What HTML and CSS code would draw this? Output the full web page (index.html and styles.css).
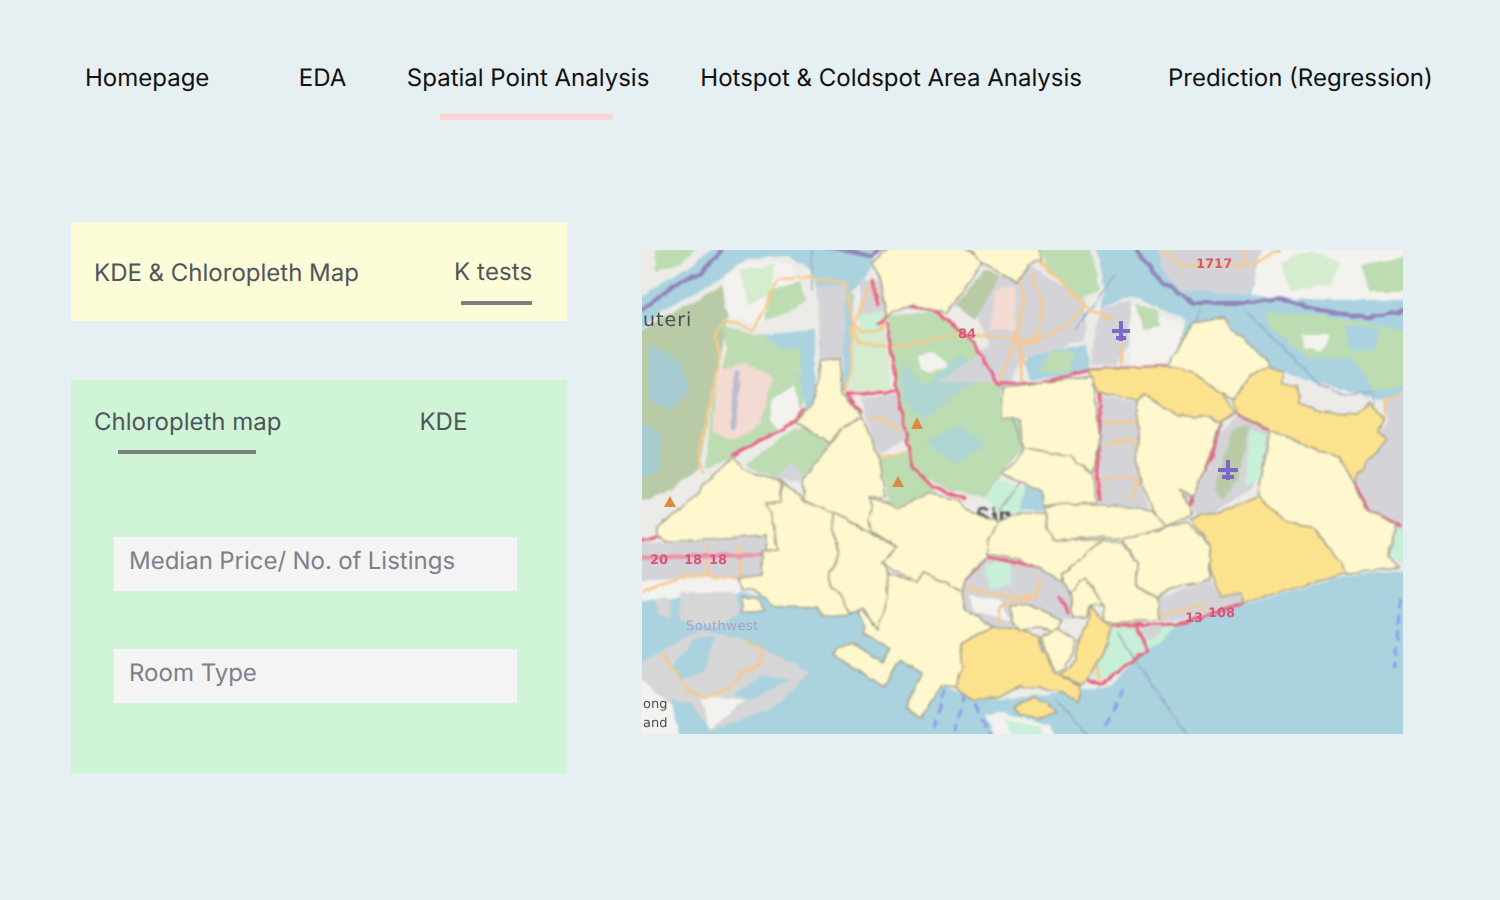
FILE: index.html
```html
<!DOCTYPE html>
<html lang="en">
<head>
<meta charset="utf-8">
<title>Spatial Point Analysis</title>
<link rel="stylesheet" href="styles.css">
</head>
<body>
<nav class="nav">
  <a class="nav-item home">Homepage</a>
  <a class="nav-item eda">EDA</a>
  <a class="nav-item spatial">Spatial Point Analysis</a>
  <a class="nav-item hotspot">Hotspot &amp; Coldspot Area Analysis</a>
  <a class="nav-item prediction">Prediction (Regression)</a>
</nav>
<div class="nav-marker"></div>
<main class="content">
  <section class="side">
    <div class="tabs-yellow">
      <div class="tab-row">
        <span>KDE &amp; Chloropleth Map</span>
        <span class="tab-k">K tests</span>
      </div>
      <div class="marker marker-k"></div>
    </div>
    <div class="card-green">
      <div class="tab-row row-green">
        <span>Chloropleth map</span>
        <span class="tab-kde">KDE</span>
      </div>
      <div class="marker marker-c"></div>
      <div class="field field-first">Median Price/ No. of Listings</div>
      <div class="field">Room Type</div>
    </div>
  </section>
  <div class="map">
    <svg class="map-svg" viewBox="642 250 761 484" width="761" height="484" xmlns="http://www.w3.org/2000/svg">
      <defs>
        <filter id="rough" x="-2%" y="-2%" width="104%" height="104%" color-interpolation-filters="sRGB">
          <feTurbulence type="fractalNoise" baseFrequency="0.09" numOctaves="2" seed="4" result="n"/>
          <feDisplacementMap in="SourceGraphic" in2="n" scale="5" xChannelSelector="R" yChannelSelector="G" result="d"/>
          <feGaussianBlur in="d" stdDeviation="0.8"/>
        </filter>
        <filter id="soft" x="-10%" y="-10%" width="120%" height="120%">
          <feGaussianBlur stdDeviation="0.6"/>
        </filter>
      </defs>
      <g class="map-art">
      <rect class="water" x="630" y="238" width="785" height="508"/>
      <!-- land -->
      <polygon class="land" points="630,340 660,312 700,292 722,278 745,258 790,256 812,270 820,300 850,295 868,272 875,238 1095,238 1105,290 1100,310 1130,295 1185,320 1180,350 1165,366 1260,366 1380,400 1415,390 1415,570 1350,575 1243,605 1180,622 1150,645 1110,686 1085,690 1000,700 950,690 860,610 740,592 630,600"/>
      <polygon class="land" points="630,238 722,238 690,268 660,285 630,302"/>
      <polygon class="green" points="655,250 700,245 680,265 655,272"/>
      <polygon class="water" points="1030,352 1087,345 1090,372 1030,380 1025,365"/>
      <polygon class="green" points="1050,352 1075,350 1070,372 1040,372"/>
      <!-- west -->
      <polygon class="olive" points="630,340 660,318 700,300 722,285 728,320 718,370 706,430 698,470 670,490 630,505"/>
      <polygon class="bluepatch" points="648,345 680,360 690,390 670,410 648,400"/>
      <polygon class="bluepatch" points="635,420 660,430 660,470 635,480"/>
      <polygon class="white" points="722,280 745,262 790,262 800,280 780,300 760,325 730,318"/>
      <polygon class="lightgreen" points="740,270 775,265 770,295 748,305"/>
      <polygon class="green" points="770,290 800,282 805,300 790,312 765,320"/>
      <polygon class="green" points="722,325 755,335 800,340 812,370 800,410 780,430 735,455 705,470 712,400 728,350"/>
      <polygon class="pink" points="718,372 745,362 772,378 768,395 760,425 735,440 712,432"/>
      <polygon class="runway" points="734,372 740,372 736,430 730,430"/>
      <polygon class="white" points="800,345 815,342 818,385 805,375"/>
      <polygon class="water" points="760,335 815,330 815,400 805,410 800,380 785,350"/>
      <polygon class="green" points="775,350 800,350 802,375 782,372"/>
      <polygon class="white" points="770,400 795,385 800,410 780,430 772,425"/>
      <!-- kranji -->
      <polygon class="water" points="805,238 880,238 870,270 860,285 845,282 815,280"/>
      <polygon class="urban" points="817,285 845,285 848,360 820,358"/>
      <polygon class="water" points="846,290 853,295 852,360 846,390 842,390"/>
      <polygon class="lightgreen" points="852,325 885,325 890,390 848,390"/>
      <polygon class="mint" points="858,316 885,310 878,330 865,330"/>
      <polygon class="urban" points="860,280 878,280 886,310 860,315"/>
      <!-- centre -->
      <polygon class="green" points="888,316 930,312 965,330 1000,385 1005,470 985,497 950,490 930,480 910,465 905,430 895,385"/>
      <polygon class="water reservoir" points="900,360 925,385 960,355 985,375 955,395 925,420 905,405"/>
      <polygon class="water reservoir" points="925,440 960,425 985,445 955,465"/>
      <polygon class="white" points="918,356 935,352 948,366 930,372 920,368"/>
      <polygon class="urban" points="860,397 897,395 905,440 880,455 872,440"/>
      <polygon class="green" points="880,460 908,450 935,490 920,505 890,505"/>
      <polygon class="green" points="745,465 795,428 840,430 805,475 780,480"/>
      <polygon class="urban" points="775,478 790,462 805,475 800,482"/>
      <polygon class="mint" points="1000,480 1040,495 1048,505 1000,515 985,497"/>
      <polygon class="green" points="1000,415 1022,420 1025,445 1003,470 985,480"/>
      <polygon class="water" points="1025,485 1048,495 1046,510 1020,510"/>
      <!-- northeast -->
      <polygon class="urban" points="965,290 1030,265 1085,300 1085,340 1020,360 1010,382 940,382 990,345"/>
      <polygon class="pink" points="995,290 1015,285 1015,330 990,330"/>
      <polygon class="olive" points="955,305 985,270 1000,275 975,320"/>
      <polygon class="green" points="1040,245 1090,245 1100,290 1080,300 1045,265"/>
      <polygon class="urban" points="1100,310 1130,300 1130,345 1115,365 1090,365"/>
      <polygon class="white" points="1130,305 1185,325 1175,350 1160,368 1130,368"/>
      <polygon class="green" points="1135,305 1158,310 1160,325 1145,330"/>
      <polygon class="urban" points="1098,395 1137,402 1142,440 1135,465 1143,490 1148,508 1100,505"/>
      <polygon class="urban" points="1213,440 1240,412 1270,432 1266,465 1250,490 1200,520 1180,490"/>
      <polygon class="olive" points="1232,430 1250,425 1238,480 1222,500 1215,490"/>
      <polygon class="mint" points="1250,430 1266,435 1260,480 1245,485"/>
      <polygon class="urban" points="1353,483 1375,440 1388,420 1383,400 1415,390 1415,525 1397,525 1367,510"/>
      <polygon class="mint" points="1397,525 1415,525 1415,570 1388,555"/>
      <!-- johor -->
      <polygon class="urban" points="1155,238 1265,238 1250,295 1180,290 1165,275"/>
      <polygon class="white" points="1262,238 1415,238 1415,300 1340,300 1275,298 1252,295"/>
      <polygon class="lightgreen" points="1280,262 1310,250 1340,262 1330,285 1290,290"/>
      <polygon class="green" points="1360,265 1415,255 1415,292 1370,292"/>
      <polygon class="green" points="1265,312 1320,315 1415,332 1415,385 1375,390 1352,358 1310,358 1270,328"/>
      <polygon class="white" points="1300,335 1330,335 1322,352 1305,348"/>
      <polygon class="water" points="1345,325 1380,328 1375,350 1350,350"/>
      <!-- south west -->
      <polygon class="urban" points="665,544 767,535 762,575 738,578 690,575 645,590 630,590 630,540"/>
      <polygon class="white" points="630,582 690,578 740,580 740,592 630,602"/>
      <polygon class="land-gray" points="680,592 735,592 740,612 715,628 680,620"/>
      <polygon class="land-gray" points="655,600 672,600 670,620 660,615"/>
      <polygon class="land-gray" points="642,662 700,630 745,640 775,655 810,672 775,708 740,720 712,730 690,702 660,700 642,690"/>
      <polygon class="water" points="695,640 715,635 705,670 680,680 670,668"/>
      <polygon class="water" points="762,675 790,680 750,700 735,695"/>
      <polygon class="white" points="700,695 745,700 710,730"/>
      <polygon class="white" points="630,672 672,705 682,746 630,746"/>
      <polygon class="white" points="985,715 1000,712 1050,725 1060,746 1000,746"/>
      <polygon class="mint" points="1005,720 1040,726 1045,740 1015,740"/>
      <polygon class="urban" points="987,557 1040,568 1063,583 1070,592 1073,617 1060,620 1040,625 993,627 980,618 965,610 962,592 965,580"/>
      <polygon class="mint" points="985,565 1010,560 1012,585 990,590"/>
      <polygon class="white" points="970,595 1000,600 1010,622 975,612"/>
      <polygon class="urban" points="1158,598 1210,580 1220,597 1242,593 1243,603 1180,620 1160,622"/>
      <polygon class="mint" points="1112,626 1180,624 1147,652 1120,672 1090,682 1105,650"/>
      <polygon class="urban" points="1140,628 1165,626 1150,642"/>

      <!-- sea lines -->
      <polyline class="sea-line" points="1117,633 1190,740"/>
      <polyline class="sea-line" points="1057,700 1090,740"/>
      <polyline class="sea-line" points="1245,310 1320,385 1345,395 1372,392 1375,405"/>
      <polyline class="sea-line" points="1115,275 1075,330"/>
      <polyline class="sea-line" points="812,245 812,290"/>
      <polyline class="sea-line" points="1200,310 1195,325"/>
      <polyline class="sea-line thin" points="1000,385 1030,470 1000,510"/>
      <polyline class="dashes" points="1400,600 1395,668"/>
      <polyline class="dashes" points="1123,690 1103,732"/>
      <polyline class="dashes" points="945,690 932,734"/>
      <polyline class="dashes" points="965,695 955,730"/>
      <polyline class="dashes" points="975,705 990,734"/>
      <!-- border -->
      <polyline class="border-line" points="636,314 680,282 700,275 725,246"/>
      <polyline class="border-line" points="1133,246 1160,280 1193,303 1253,303 1277,298 1320,310 1367,318 1409,310"/>
      <polyline class="border-line" points="825,246 870,256 885,246"/>
      <!-- orange roads -->
      <polyline class="road" points="703,473 698,457 710,403 720,357 715,337 725,320 753,330 763,310 777,280 807,277 847,283 852,323 850,373 845,390"/>
      <polyline class="road" points="852,323 857,343 887,347 907,345 957,335 977,335 1013,338 1040,343"/>
      <polyline class="road" points="852,320 862,332 880,330 890,312"/>
      <polyline class="road" points="857,320 865,295 870,285 878,290"/>
      <polyline class="road" points="868,420 882,418 898,430"/>
      <polyline class="road" points="880,458 905,452"/>
      <polyline class="road" points="1000,380 1015,340 1025,300 1020,280"/>
      <polyline class="road" points="1015,335 1025,365"/>
      <polyline class="road" points="1040,262 1060,280 1086,307 1112,320"/>
      <polyline class="road" points="1086,307 1060,330 1020,345 1022,385"/>
      <polyline class="road" points="1032,275 1042,300 1040,330 1025,345"/>
      <polyline class="road" points="1122,345 1122,365"/>
      <polyline class="road" points="1106,423 1138,422"/>
      <polyline class="road" points="1106,445 1130,440 1138,448"/>
      <polyline class="road" points="1098,480 1125,476 1140,480 1130,500"/>
      <polyline class="road" points="1165,252 1180,265 1250,265 1280,250"/>
      <polyline class="road" points="1245,250 1245,262"/>
      <polyline class="road" points="642,592 690,575 738,578"/>
      <polyline class="road" points="707,545 707,575"/>
      <polyline class="road" points="738,545 742,578"/>
      <polyline class="road" points="965,587 1007,597 1037,597 1040,580"/>
      <polyline class="road" points="1037,597 1000,605 998,622"/>
      <polyline class="road" points="1160,616 1200,605 1205,612"/>
      <polyline class="road" points="745,640 762,650 760,665 740,672 735,685 705,698 688,690 662,653"/>
      <polyline class="road" points="1400,395 1385,400 1383,420"/>
      <polyline class="road" points="1095,660 1100,680"/>
      <!-- red roads -->
      <polyline class="motorway" points="733,455 787,427 803,410"/>
      <polyline class="motorway" points="847,393 897,392 887,323"/>
      <polyline class="motorway" points="847,393 860,412"/>
      <polyline class="motorway" points="897,392 907,440 912,467 933,487 965,498"/>
      <polyline class="motorway" points="878,305 872,280"/>
      <polyline class="motorway" points="878,325 892,310 907,306 933,310 960,330 973,342 997,383 1040,383 1090,370 1167,366"/>
      <polyline class="motorway" points="1100,393 1100,427 1097,473 1100,500"/>
      <polyline class="motorway" points="1220,423 1213,453 1197,483 1190,505"/>
      <polyline class="motorway" points="1237,413 1267,430"/>
      <polyline class="motorway" points="1352,480 1370,512 1400,525"/>
      <polyline class="motorway wide" points="636,558 700,556 765,555"/>
      <polyline class="motorway" points="636,540 660,538"/>
      <polyline class="motorway" points="965,580 987,557 1040,567"/>
      <polyline class="motorway" points="1112,625 1180,624 1243,603"/>
      <polyline class="motorway" points="1137,627 1148,650 1120,670 1100,685 1087,680"/>
      <polyline class="motorway" points="1060,596 1068,612"/>
      <text class="lbl-dark lbl-sin" x="976" y="522">Sin</text>
      <!-- regions -->
      <polygon class="r" points="872,263 890,246 962,246 983,263 947,313 933,310 913,305 893,312 887,318 878,273"/>
      <polygon class="r" points="965,246 1040,246 1041,260 1028,265 1018,283 1000,272 983,263"/>
      <polygon class="r" points="822,360 840,358 843,393 857,410 862,418 843,427 830,442 813,433 795,422 813,403 817,383"/>
      <polygon class="r" points="732,457 743,470 780,480 782,502 767,503 773,517 777,550 766,552 767,535 665,542 657,537 657,527 693,497"/>
      <polygon class="r" points="782,482 805,500 832,512 833,537 840,553 828,580 830,587 840,592 850,615 822,617 818,608 783,607 773,605 757,590 743,590 738,578 762,575 762,552 777,550 773,517 767,503 782,502"/>
      <polygon class="r" points="742,597 758,598 765,612 742,612"/>
      <polygon class="r" points="832,512 897,547 883,562 888,573 887,597 878,630 872,623 863,608 850,615 840,592 830,587 828,580 840,553 833,537"/>
      <polygon class="r" points="862,418 880,460 885,497 870,497 873,510 868,520 873,532 897,547 832,512 805,500 803,480 843,427"/>
      <polygon class="r" points="870,497 900,508 927,493 957,500 967,510 998,522 988,543 987,557 965,580 962,592 940,580 922,573 918,582 888,567 883,562 897,547 873,532 868,520 873,510"/>
      <polygon class="r" points="888,573 918,582 922,573 940,580 962,592 965,610 980,618 993,627 960,643 962,670 955,687 942,685 922,717 905,708 923,673 900,660 885,687 833,655 837,648 853,643 882,662 890,648 863,633 865,627 858,612 863,608 872,623 878,630 887,597"/>
      <polygon class="o" points="993,627 1020,629 1038,637 1042,647 1055,672 1080,685 1079,703 1063,693 1040,688 1020,687 1000,697 975,700 955,687 962,670 960,643"/>
      <polygon class="o" points="1090,606 1110,627 1108,643 1100,660 1083,685 1060,675 1075,662 1078,640 1087,625"/>
      <polygon class="o" points="1014,706 1033,698 1047,703 1057,712 1040,718 1020,715"/>
      <polygon class="r" points="1010,606 1030,604 1062,620 1055,632 1040,628 1020,630 1012,622"/>
      <polygon class="r" points="1040,637 1057,628 1075,640 1073,653 1063,670 1055,672"/>
      <polygon class="r" points="1070,592 1085,578 1103,605 1090,605 1085,617 1073,617"/>
      <polygon class="r" points="1045,507 1067,503 1153,510 1167,527 1123,540 1103,537 1053,540 1047,530"/>
      <polygon class="r" points="998,522 1020,513 1045,513 1047,530 1053,540 1103,540 1063,573 1063,583 1040,568 1020,560 993,555 987,555 988,543"/>
      <polygon class="r" points="1103,540 1122,543 1137,563 1137,587 1158,598 1160,620 1105,623 1103,605 1085,578 1070,592 1063,583 1063,573"/>
      <polygon class="r" points="1123,540 1187,522 1210,545 1210,580 1170,588 1158,597 1137,587 1137,563"/>
      <polygon class="o" points="1190,518 1227,510 1258,497 1290,523 1315,528 1325,543 1348,573 1243,603 1242,593 1220,597 1210,567 1210,545"/>
      <polygon class="r" points="1258,497 1270,430 1310,448 1340,457 1353,483 1367,510 1397,525 1388,555 1400,568 1348,573 1325,543 1315,528 1290,523"/>
      <polygon class="o" points="1233,400 1253,373 1270,367 1283,373 1283,385 1297,385 1300,403 1320,412 1357,415 1370,403 1383,420 1378,432 1388,440 1367,462 1353,482 1340,457 1310,448 1270,430 1237,412"/>
      <polygon class="o" points="1088,370 1167,366 1193,372 1220,393 1235,412 1220,423 1210,418 1177,415 1145,395 1137,400 1098,392"/>
      <polygon class="r" points="1167,366 1193,323 1223,318 1230,328 1268,360 1270,367 1253,373 1233,400 1220,393 1193,372"/>
      <polygon class="r" points="1137,400 1145,395 1177,415 1210,418 1220,423 1213,447 1193,497 1180,490 1193,513 1167,527 1153,510 1143,487 1135,460 1138,440"/>
      <polygon class="r" points="1003,387 1088,377 1093,377 1100,440 1093,473 1070,457 1023,447 1022,440 1020,420 1002,417"/>
      <polygon class="r" points="1023,447 1070,457 1093,473 1097,503 1045,505 1040,490 1020,483 1002,473 1018,460"/>
      </g>
      <g class="map-soft">
      <polygon class="peak" points="917,417 923,429 911,429"/>
      <polygon class="peak" points="898,476 904,487 892,487"/>
      <polygon class="peak" points="670,496 676,507 664,507"/>
      <path class="plane" d="M1121 321v20M1112 331h18M1116 338h10"/>
      <path class="plane" d="M1228 460v20M1218 470h20M1222 477h12"/>
      <text class="lbl-dark" x="643" y="326">uteri</text>
      <text class="lbl-purple" x="686" y="630">Southwest</text>
      <text class="lbl-dark small" x="643" y="708">ong</text>
      <text class="lbl-dark small" x="643" y="727">and</text>
      <text class="lbl-red" x="650" y="564">20</text>
      <text class="lbl-red" x="684" y="564">18</text>
      <text class="lbl-red" x="709" y="564">18</text>
      <text class="lbl-red" x="1185" y="622">13</text>
      <text class="lbl-red" x="1208" y="617">108</text>
      <text class="lbl-red" x="1196" y="268">1717</text>
      <text class="lbl-red" x="958" y="338">84</text>
      </g>
    </svg>
  </div>
</main>
</body>
</html>
```
FILE: styles.css
```css
* { box-sizing: border-box; }
html, body { margin: 0; height: 100%; }
body {
  width: 1500px;
  height: 900px;
  overflow: hidden;
  background: #e6eff1;
  font-family: Inter, "Noto Sans", sans-serif;
  font-size: 24px;
  line-height: 30px;
  text-rendering: geometricPrecision;
}
.nav { display: flex; padding: 63px 0 0 85px; color: #111; }
.nav-item { white-space: nowrap; }
.eda { margin-left: 89.5px; }
.spatial { margin-left: 60.5px; }
.hotspot { margin-left: 51px; }
.prediction { margin-left: 86px; }
.nav-marker { width: 173px; height: 6px; margin: 21px 0 0 440px; background: #fbd4d4; }
.content { display: flex; margin: 102px 0 0 71px; }
.side { width: 496px; color: #50555a; }
.tabs-yellow { height: 99px; padding: 36px 23px 0; background: #fdfcd8; }
.tab-row { display: flex; height: 30px; white-space: nowrap; }
.tab-k { margin-left: 95px; letter-spacing: .15px; transform: translateY(-1px); }
.tab-kde { margin-left: 138px; }
.marker { height: 4px; background: #7b7e82; }
.marker-k { width: 71px; margin: 13px 0 0 367px; }
.card-green { height: 393px; margin-top: 59px; padding: 27px 23px 0; background: #d0f4d6; }
.marker-c { width: 138px; margin: 13px 0 0 24px; }
.field {
  width: 403px;
  height: 54px;
  margin: 58px 0 0 20px;
  padding: 9px 15px;
  background: #f4f4f5;
  color: #7e808a;
}
.field-first { margin-top: 83px; word-spacing: -.4px; }
.map { width: 761px; height: 484px; margin: 28px 0 0 75px; overflow: hidden; }
.map-svg { display: block; width: 761px; height: 484px; }
.map-art { filter: url(#rough); }
.map-soft { filter: url(#soft); }
.water { fill: #aad3df; }
.reservoir { opacity: .7; }
.land { fill: #ecebe7; }
.land-gray { fill: #d6d6d6; }
.olive { fill: #b8cba6; }
.bluepatch { fill: #a6cbd0; }
.white { fill: #f3f2ef; }
.green { fill: #bddcb2; }
.lightgreen { fill: #d5eccf; }
.mint { fill: #c8efd8; }
.pink { fill: #f3dad3; }
.runway { fill: #bcbdd2; }
.urban { fill: #d4d4d8; }
polyline { fill: none; stroke-linejoin: round; stroke-linecap: round; }
.road { stroke: #f8c98c; stroke-width: 2.6; }
.motorway { stroke: #e8617f; stroke-width: 3; }
.motorway.wide { stroke: #ec8ea2; stroke-width: 4; }
.sea-line { stroke: #96a5bd; stroke-width: 1.6; opacity: .8; }
.sea-line.thin { stroke: #9aa5a5; }
.border-line { stroke: #8f82b8; stroke-width: 4; }
.dashes { stroke: #8aa0e6; stroke-width: 3; stroke-dasharray: 7 9; }
.peak { fill: #d98c3f; }
.plane { fill: none; stroke: #7d68c8; stroke-width: 4; }
.r, .o { stroke: #a5a38f; stroke-width: 1.6; stroke-linejoin: round; }
.r { fill: #fff8ce; }
.o { fill: #fde28e; }
text { font-family: "DejaVu Sans", sans-serif; }
.lbl-dark { font-size: 19px; fill: #4a4e4e; letter-spacing: 1px; }
.lbl-dark.small { font-size: 13px; letter-spacing: 0; }
.lbl-sin { font-weight: 700; }
.lbl-purple { font-size: 13px; fill: #b29cc7; letter-spacing: .5px; }
.lbl-red { font-size: 13px; font-weight: 700; fill: #d9567a; }
```
